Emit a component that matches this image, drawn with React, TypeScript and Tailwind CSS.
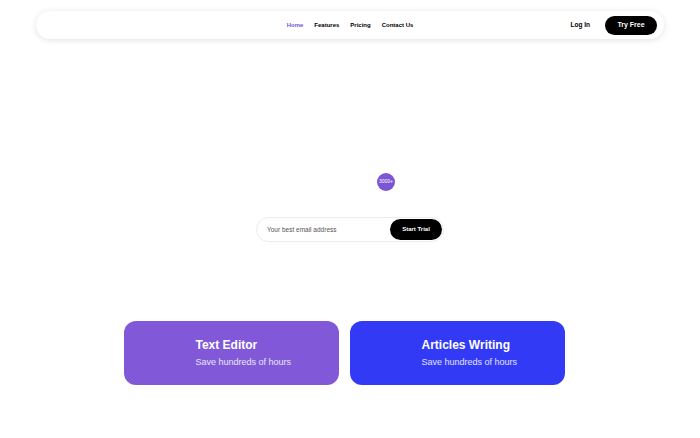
export default function App() {
  const links = ["Home", "Features", "Pricing", "Contact Us"];
  return (
    <div className="min-h-[438px] w-full bg-white font-['Liberation_Sans',Arial,sans-serif] text-black">
      <div className="px-[36px] pt-[11px]">
        <nav className="grid h-[28px] grid-cols-3 items-center rounded-full bg-white px-[7px] shadow-[0_1px_6px_rgba(0,0,0,0.12)]">
          <div />
          <div className="flex items-center justify-center gap-[11px] text-[6px] font-bold">
            {links.map((l, i) => (
              <a key={l} className={i === 0 ? "text-[#7b55d3]" : "text-black"}>
                {l}
              </a>
            ))}
          </div>
          <div className="flex items-center justify-end gap-[15px]">
            <span className="text-[6.5px] font-bold">Log In</span>
            <button className="h-[19px] w-[52px] rounded-full bg-black text-[7px] font-bold text-white">Try Free</button>
          </div>
        </nav>
      </div>

      <div className="flex flex-col items-center">
        <div className="mt-[134px] ml-[72px] flex h-[18px] w-[18px] items-center justify-center rounded-full bg-[#7b55d3] text-[5px] text-white">
          3000+
        </div>
        <div className="mt-[26px] flex h-[25px] w-[188px] items-center justify-between rounded-full border border-[#ececec] bg-white pl-[10px] pr-[1px]">
          <span className="text-[6.5px] text-[#555]">Your best email address</span>
          <button className="h-[21px] w-[52px] rounded-full bg-black text-[6px] font-bold text-white">Start Trial</button>
        </div>
      </div>

      <div className="mt-[79px] flex justify-center gap-[11px] pr-[12px]">
        <div className="flex h-[64px] w-[215px] flex-col justify-center rounded-[12px] bg-[#8058d8] pl-[72px] text-white">
          <div className="text-[12px] font-bold leading-[15px]">Text Editor</div>
          <div className="mt-[3px] text-[9px] leading-[12px] text-white/85">Save hundreds of hours</div>
        </div>
        <div className="flex h-[64px] w-[215px] flex-col justify-center rounded-[12px] bg-[#333af5] pl-[72px] text-white">
          <div className="text-[12px] font-bold leading-[15px]">Articles Writing</div>
          <div className="mt-[3px] text-[9px] leading-[12px] text-white/85">Save hundreds of hours</div>
        </div>
      </div>
    </div>
  );
}
